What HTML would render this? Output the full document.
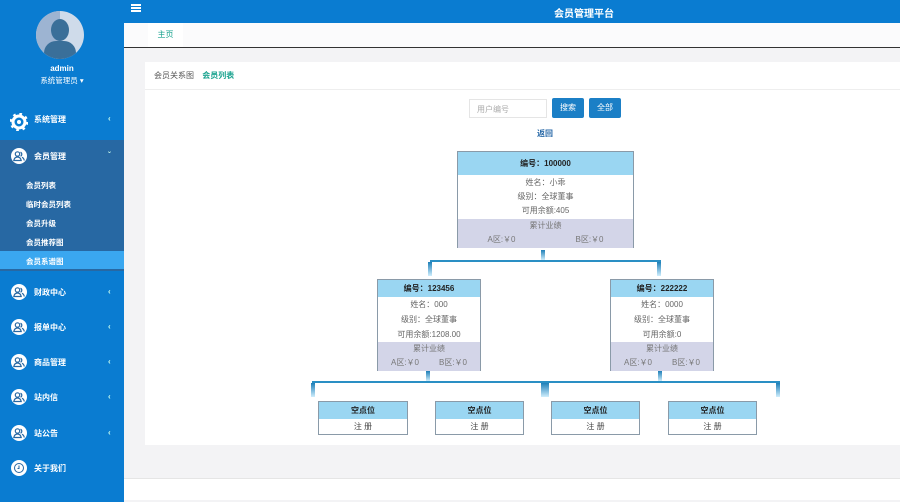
<!DOCTYPE html>
<html><head><meta charset="utf-8"><style>
*{margin:0;padding:0;box-sizing:border-box}
body{width:900px;height:502px;overflow:hidden;font-family:"Liberation Sans","Noto Sans CJK SC",sans-serif;font-size:8px;background:#f3f3f5;position:relative;color:#666}
.a{position:absolute}
#side{left:0;top:0;width:124px;height:502px;background:#0a7cd1}
.it{position:absolute;left:0;width:124px;color:#fff;font-weight:bold;font-size:8px}
.ic{position:absolute;left:11px;width:16px;height:16px}
.lb{position:absolute;left:34px}
.ch{position:absolute;left:108px;font-size:8px;color:#cfe}
.sub{position:absolute;left:26px;color:#fff;font-weight:bold;font-size:7.5px}
.nd{position:absolute;border:1px solid #8a9aa8;background:#fff;text-align:center}
.hd{background:#9ad6f2;color:#222;font-weight:bold}
.gr{background:#d3d5e8;color:#777}
.ln{position:absolute;background:#2a8fc4}
.dr{position:absolute;width:4px;background:linear-gradient(#1e7fb8,#cfeefc)}
</style></head><body>
<svg width="0" height="0" style="position:absolute"><defs>
<symbol id="u" viewBox="0 0 16 16"><circle cx="8" cy="8" r="8" fill="#fff"/><circle cx="6.5" cy="6" r="2.2" fill="none" stroke="#2768a3" stroke-width="1.2"/><path d="M2.8 12.5c.5-2.5 2-3.5 3.7-3.5s3.2 1 3.7 3.5z" fill="none" stroke="#2768a3" stroke-width="1.2"/><path d="M9.5 4.2a2.2 2.2 0 0 1 0 4M11 9.3c1.2.5 2 1.6 2.3 3.2" fill="none" stroke="#2768a3" stroke-width="1.2"/></symbol>
</defs></svg>
<div id="side" class="a">
 <div class="a" style="left:36px;top:11px;width:48px;height:48px;border-radius:50%;background:#cfdbea;overflow:hidden">
  <div class="a" style="left:0;top:0;width:24px;height:48px;background:#9db4d2"></div>
  <div class="a" style="left:15px;top:8px;width:18px;height:22px;border-radius:50%;background:#3a6f99"></div>
  <div class="a" style="left:8px;top:30px;width:32px;height:24px;border-radius:12px 12px 0 0;background:#3a6f99"></div>
 </div>
 <div class="a" style="left:0;top:64px;width:124px;text-align:center;color:#fff;font-weight:bold;font-size:8px">admin</div>
 <div class="a" style="left:0;top:75px;width:124px;text-align:center;color:#fff;font-size:7.5px">系统管理员 ▾</div>
 <div class="it" style="top:114px"><svg class="ic" style="top:-1px;left:10px;width:18px;height:18px" viewBox="0 0 18 18"><circle cx="9" cy="9" r="6" fill="none" stroke="#fff" stroke-width="3"/><circle cx="9" cy="9" r="8" fill="none" stroke="#fff" stroke-width="2.5" stroke-dasharray="2.6 3.7"/><circle cx="9" cy="9" r="2" fill="#fff"/></svg><span class="lb">系统管理</span><span class="ch">‹</span></div>
 <div class="a" style="left:0;top:140px;width:124px;height:131px;background:#2768a3"></div>
 <div class="it" style="top:151px"><svg class="ic" style="top:-3px"><use href="#u"/></svg><span class="lb">会员管理</span><span class="ch">ˇ</span></div>
 <div class="sub" style="top:180px">会员列表</div>
 <div class="sub" style="top:199px">临时会员列表</div>
 <div class="sub" style="top:218px">会员升级</div>
 <div class="sub" style="top:237px">会员推荐图</div>
 <div class="a" style="left:0;top:251px;width:124px;height:18px;background:#3aa7f0"></div>
 <div class="sub" style="top:256px">会员系谱图</div>
 <div class="it" style="top:287px"><svg class="ic" style="top:-3px"><use href="#u"/></svg><span class="lb">财政中心</span><span class="ch">‹</span></div>
 <div class="it" style="top:322px"><svg class="ic" style="top:-3px"><use href="#u"/></svg><span class="lb">报单中心</span><span class="ch">‹</span></div>
 <div class="it" style="top:357px"><svg class="ic" style="top:-3px"><use href="#u"/></svg><span class="lb">商品管理</span><span class="ch">‹</span></div>
 <div class="it" style="top:392px"><svg class="ic" style="top:-3px"><use href="#u"/></svg><span class="lb">站内信</span><span class="ch">‹</span></div>
 <div class="it" style="top:428px"><svg class="ic" style="top:-3px"><use href="#u"/></svg><span class="lb">站公告</span><span class="ch">‹</span></div>
 <div class="it" style="top:463px"><svg class="ic" style="top:-3px" viewBox="0 0 16 16"><circle cx="8" cy="8" r="8" fill="#fff"/><circle cx="8" cy="8" r="4.5" fill="none" stroke="#2768a3" stroke-width="1"/><path d="M8 5.5v3h-1.5" fill="none" stroke="#2768a3" stroke-width="1"/></svg><span class="lb">关于我们</span></div>
</div>
<div class="a" style="left:124px;top:0;width:776px;height:23px;background:#0a7cd1"></div>
<div class="a" style="left:131px;top:4px;width:10px;height:2px;background:#fff;box-shadow:0 3px 0 #fff,0 6px 0 #fff"></div>
<div class="a" style="left:124px;top:5px;width:920px;text-align:center;color:#fff;font-weight:bold;font-size:10px">会员管理平台</div>
<div class="a" style="left:124px;top:23px;width:776px;height:25px;background:#fbfbfc;border-bottom:1px solid #333"></div>
<div class="a" style="left:148px;top:23px;width:35px;height:24px;background:#fff;color:#1aa38f;text-align:center;line-height:24px">主页</div>
<div class="a" style="left:145px;top:62px;width:755px;height:383px;background:#fff"></div>
<div class="a" style="left:145px;top:89px;width:755px;height:1px;background:#eee"></div>
<div class="a" style="left:154px;top:70px;color:#555">会员关系图 <span style="color:#1aa38f;font-weight:bold;margin-left:6px">会员列表</span></div>
<div class="a" style="left:124px;top:478px;width:776px;height:22px;background:#fff;border-top:1px solid #e5e5e5"></div>
<div class="a" style="left:469px;top:99px;width:78px;height:19px;border:1px solid #e5e5e5;color:#aaa;padding:4px 7px">用户编号</div>
<div class="a" style="left:552px;top:98px;width:32px;height:20px;background:#1b7fc6;color:#fff;text-align:center;line-height:20px;border-radius:2px">搜索</div>
<div class="a" style="left:589px;top:98px;width:32px;height:20px;background:#1b7fc6;color:#fff;text-align:center;line-height:20px;border-radius:2px">全部</div>
<div class="a" style="left:530px;top:128px;width:30px;text-align:center;color:#2a6aa8;font-weight:bold">返回</div>

<div class="nd" style="left:457px;top:151px;width:177px;height:97px">
 <div class="hd" style="height:23px;line-height:23px">编号：100000</div>
 <div style="line-height:14px;padding-top:1px">姓名：小乖<br>级别：全球董事<br>可用余额:405</div>
 <div class="gr" style="position:absolute;left:0;top:67px;width:175px;height:29px;line-height:14px">累计业绩<br><span style="margin-right:60px">A区:￥0</span>B区:￥0</div>
</div>
<div class="dr" style="left:541px;top:250px;height:10px"></div>
<div class="ln" style="left:430px;top:260px;width:231px;height:2px"></div>
<div class="dr" style="left:428px;top:262px;height:14px"></div>
<div class="dr" style="left:657px;top:262px;height:14px"></div>

<div class="nd" style="left:377px;top:279px;width:104px;height:92px">
 <div class="hd" style="height:17px;line-height:17px">编号：123456</div>
 <div style="line-height:15px">姓名：000<br>级别：全球董事<br>可用余额:1208.00</div>
 <div class="gr" style="position:absolute;left:0;top:62px;width:102px;height:29px;line-height:14px">累计业绩<br><span style="margin-right:20px">A区:￥0</span>B区:￥0</div>
</div>
<div class="nd" style="left:610px;top:279px;width:104px;height:92px">
 <div class="hd" style="height:17px;line-height:17px">编号：222222</div>
 <div style="line-height:15px">姓名：0000<br>级别：全球董事<br>可用余额:0</div>
 <div class="gr" style="position:absolute;left:0;top:62px;width:102px;height:29px;line-height:14px">累计业绩<br><span style="margin-right:20px">A区:￥0</span>B区:￥0</div>
</div>
<div class="dr" style="left:426px;top:371px;height:10px"></div>
<div class="dr" style="left:658px;top:371px;height:10px"></div>
<div class="ln" style="left:312px;top:381px;width:468px;height:2px"></div>
<div class="dr" style="left:311px;top:383px;height:14px"></div>
<div class="dr" style="left:541px;top:383px;height:14px;width:8px"></div>
<div class="dr" style="left:776px;top:383px;height:14px"></div>

<div class="nd" style="left:318px;top:401px;width:90px;height:34px"><div class="hd" style="height:17px;line-height:17px">空点位</div><div style="line-height:15px;color:#444">注 册</div></div>
<div class="nd" style="left:435px;top:401px;width:89px;height:34px"><div class="hd" style="height:17px;line-height:17px">空点位</div><div style="line-height:15px;color:#444">注 册</div></div>
<div class="nd" style="left:551px;top:401px;width:89px;height:34px"><div class="hd" style="height:17px;line-height:17px">空点位</div><div style="line-height:15px;color:#444">注 册</div></div>
<div class="nd" style="left:668px;top:401px;width:89px;height:34px"><div class="hd" style="height:17px;line-height:17px">空点位</div><div style="line-height:15px;color:#444">注 册</div></div>
</body></html>
